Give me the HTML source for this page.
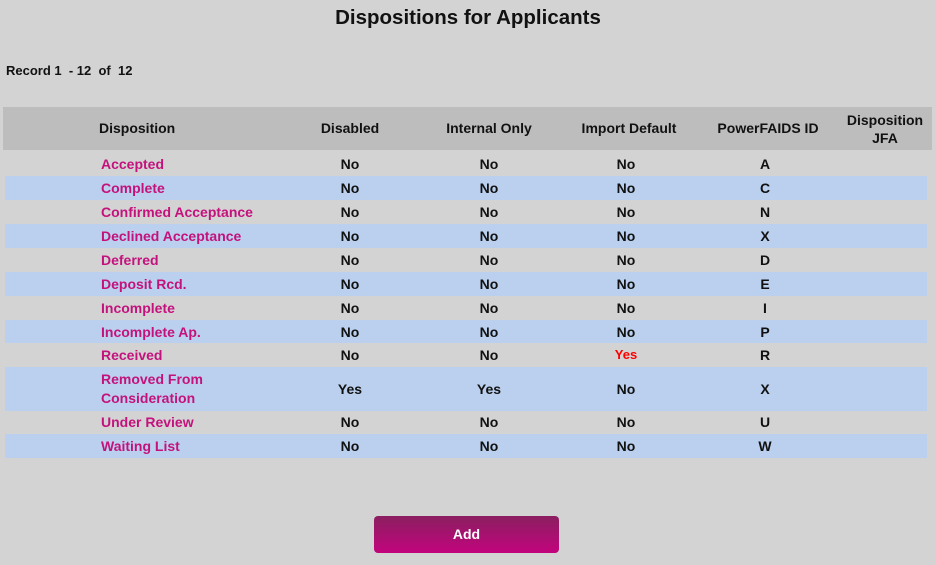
<!DOCTYPE html>
<html><head><style>
body{margin:0;width:936px;height:565px;background:#d3d3d3;font-family:"Liberation Sans",sans-serif;font-weight:bold;font-size:14px;color:#111;position:relative;overflow:hidden}
.a{position:absolute}
h1{position:absolute;top:6px;left:0;width:936px;text-align:center;font-size:20.5px;margin:0;color:#111}
.hdr{position:absolute;left:3px;top:107px;width:929px;height:43px;background:#bdbdbd}
.row{position:absolute;left:5px;width:922px}
.s{background:#bad0ee}
.c{position:absolute;text-align:center;transform:translateX(-50%);white-space:nowrap}
.d{position:absolute;left:96px;color:#c4127d;line-height:19px;margin-top:1px}
.btn{position:absolute;left:374px;top:516px;width:185px;height:37px;border-radius:4px;background:linear-gradient(#8a1f60,#c2047d);color:#fff;text-align:center;line-height:37px;font-size:14px}
</style></head><body>
<h1>Dispositions for Applicants</h1>
<div class="a" style="left:6px;top:63px;font-size:13px">Record 1 &nbsp;- 12 &nbsp;of &nbsp;12</div>
<div class="hdr"></div>
<div class="a" style="left:99px;top:120px">Disposition</div>
<div class="c" style="left:350px;top:120px">Disabled</div>
<div class="c" style="left:489px;top:120px">Internal Only</div>
<div class="c" style="left:629px;top:120px">Import Default</div>
<div class="c" style="left:768px;top:120px">PowerFAIDS ID</div>
<div class="c" style="left:885px;top:111px;line-height:18px">Disposition<br>JFA</div>
<div class="row" style="top:152px;height:24px"><div class="d" style="top:2px">Accepted</div><div class="c" style="left:345px;top:4px">No</div><div class="c" style="left:484px;top:4px">No</div><div class="c" style="left:621px;top:4px">No</div><div class="c" style="left:760px;top:4px">A</div></div>
<div class="row s" style="top:176px;height:24px"><div class="d" style="top:2px">Complete</div><div class="c" style="left:345px;top:4px">No</div><div class="c" style="left:484px;top:4px">No</div><div class="c" style="left:621px;top:4px">No</div><div class="c" style="left:760px;top:4px">C</div></div>
<div class="row" style="top:200px;height:24px"><div class="d" style="top:2px">Confirmed Acceptance</div><div class="c" style="left:345px;top:4px">No</div><div class="c" style="left:484px;top:4px">No</div><div class="c" style="left:621px;top:4px">No</div><div class="c" style="left:760px;top:4px">N</div></div>
<div class="row s" style="top:224px;height:24px"><div class="d" style="top:2px">Declined Acceptance</div><div class="c" style="left:345px;top:4px">No</div><div class="c" style="left:484px;top:4px">No</div><div class="c" style="left:621px;top:4px">No</div><div class="c" style="left:760px;top:4px">X</div></div>
<div class="row" style="top:248px;height:24px"><div class="d" style="top:2px">Deferred</div><div class="c" style="left:345px;top:4px">No</div><div class="c" style="left:484px;top:4px">No</div><div class="c" style="left:621px;top:4px">No</div><div class="c" style="left:760px;top:4px">D</div></div>
<div class="row s" style="top:272px;height:24px"><div class="d" style="top:2px">Deposit Rcd.</div><div class="c" style="left:345px;top:4px">No</div><div class="c" style="left:484px;top:4px">No</div><div class="c" style="left:621px;top:4px">No</div><div class="c" style="left:760px;top:4px">E</div></div>
<div class="row" style="top:296px;height:24px"><div class="d" style="top:2px">Incomplete</div><div class="c" style="left:345px;top:4px">No</div><div class="c" style="left:484px;top:4px">No</div><div class="c" style="left:621px;top:4px">No</div><div class="c" style="left:760px;top:4px">I</div></div>
<div class="row s" style="top:320px;height:23px"><div class="d" style="top:2px">Incomplete Ap.</div><div class="c" style="left:345px;top:4px">No</div><div class="c" style="left:484px;top:4px">No</div><div class="c" style="left:621px;top:4px">No</div><div class="c" style="left:760px;top:4px">P</div></div>
<div class="row" style="top:343px;height:24px"><div class="d" style="top:2px">Received</div><div class="c" style="left:345px;top:4px">No</div><div class="c" style="left:484px;top:4px">No</div><div class="c" style="left:621px;top:4px;color:#f00;font-size:13px">Yes</div><div class="c" style="left:760px;top:4px">R</div></div>
<div class="row s" style="top:367px;height:44px"><div class="d" style="top:2px">Removed From<br>Consideration</div><div class="c" style="left:345px;top:14px">Yes</div><div class="c" style="left:484px;top:14px">Yes</div><div class="c" style="left:621px;top:14px">No</div><div class="c" style="left:760px;top:14px">X</div></div>
<div class="row" style="top:411px;height:23px"><div class="d" style="top:1px">Under Review</div><div class="c" style="left:345px;top:3px">No</div><div class="c" style="left:484px;top:3px">No</div><div class="c" style="left:621px;top:3px">No</div><div class="c" style="left:760px;top:3px">U</div></div>
<div class="row s" style="top:434px;height:24px"><div class="d" style="top:2px">Waiting List</div><div class="c" style="left:345px;top:4px">No</div><div class="c" style="left:484px;top:4px">No</div><div class="c" style="left:621px;top:4px">No</div><div class="c" style="left:760px;top:4px">W</div></div>
<div class="btn">Add</div>
</body></html>
